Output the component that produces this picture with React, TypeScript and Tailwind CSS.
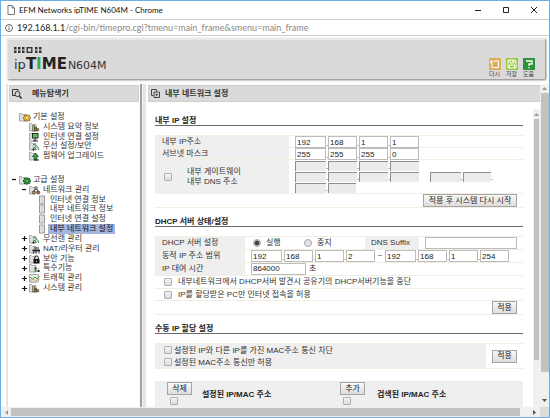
import type { ReactNode } from "react";

const KR = "font-['Liberation_Sans','Noto_Sans_CJK_KR',sans-serif]";
const UI = "font-['Lato','Noto_Sans',sans-serif]";

/* ---------- form controls ---------- */

function Check({ id }: { id: string }) {
  return (
    <input
      id={id}
      type="checkbox"
      className="block size-2 shrink-0 appearance-none rounded-[1px] border border-[#b0b0b0] bg-linear-to-b from-[#f4f4f4] to-[#dcdcdc]"
    />
  );
}

function Radio({ id, checked }: { id: string; checked?: boolean }) {
  return (
    <input
      id={id}
      type="radio"
      name="dhcp"
      defaultChecked={checked}
      className="block size-2 shrink-0 appearance-none rounded-full border border-[#a8a8a8] bg-[#e4e4e4] checked:bg-[radial-gradient(circle,#444_0_2px,#eee_3px)]"
    />
  );
}

function Button({ children }: { children: ReactNode }) {
  return (
    <button className="flex h-[13px] shrink-0 items-center justify-center border border-[#a5a5a5] bg-linear-to-b from-[#f8f8f8] to-[#dddddd] px-1 leading-none whitespace-nowrap text-[#222]">
      {children}
    </button>
  );
}

function Octets({ label, values, disabled, narrow }: { label: string; values: string[]; disabled?: boolean; narrow?: boolean }) {
  return (
    <div className={`flex shrink-0 items-center ${values.length === 2 ? "w-[61px]" : "w-[124px]"} ${narrow ? "h-[11px]" : "h-3"}`}>
      {values.map((v, i) => (
        <div key={i} className="flex h-full flex-1 items-end">
          {i > 0 && <span className="w-[2px] shrink-0 leading-[8px]">.</span>}
          <input
            aria-label={`${label} ${i + 1}`}
            defaultValue={v}
            disabled={disabled}
            className={
              disabled
                ? "h-[10px] w-0 flex-1 border-t border-l border-[#8f8f8f] bg-[#ebebeb] px-px"
                : "h-full w-0 flex-1 border border-[#bcbcbc] bg-white pl-px text-[#222]"
            }
          />
        </div>
      ))}
    </div>
  );
}

function Heading({ children }: { children: ReactNode }) {
  return (
    <h2 className="mt-2 flex h-[11px] items-end border-b border-[#6a6a6a] leading-[9px] font-bold text-[#222]">{children}</h2>
  );
}

/* ---------- icons ---------- */

function PageIcon() {
  return (
    <svg viewBox="0 0 8 10" className="h-[10px] w-2 shrink-0" fill="none" stroke="#777">
      <path d="M1 .5h4l2.5 2.5v6.500H1z" />
      <path d="M5 .5V3h2.500" />
    </svg>
  );
}

function Arrow({ d, color = "#555" }: { d: string; color?: string }) {
  return (
    <svg viewBox="0 0 5 5" className="size-[5px] shrink-0" fill={color}>
      <path d={d} />
    </svg>
  );
}

type Kind = "gold" | "green" | "chart" | "monitor" | "wave" | "upload" | "network" | "router" | "lock" | "grid" | "traffic" | "leaf";

const badge: Record<Kind, ReactNode> = {
  gold: (
    <g>
      <path d="M8 2.500l1.200 1 1.500-.2.100 1.500 1 1.200-1 1.200-.1 1.500-1.500-.2L8 9.500l-1.200-1-1.500.2-.1-1.500-1-1.200 1-1.200.1-1.500 1.500.2z" fill="#f0bd3c" stroke="#6b4e14" strokeWidth=".7" />
      <path d="M8 4.200v3.600M6.200 6h3.600" stroke="#6b4e14" strokeWidth=".5" />
      <circle cx="8" cy="6" r="1" fill="#fff3c0" />
    </g>
  ),
  green: (
    <g>
      <path d="M8 2.500l1.200 1 1.500-.2.100 1.500 1 1.200-1 1.200-.1 1.500-1.500-.2L8 9.500l-1.200-1-1.500.2-.1-1.500-1-1.200 1-1.200.1-1.500 1.500.2z" fill="#2d9a3a" stroke="#103c16" strokeWidth=".8" />
      <path d="M8 4.200v3.600M6.200 6h3.600" stroke="#103c16" strokeWidth=".5" />
      <circle cx="8" cy="6" r=".8" fill="#b8e8b0" />
    </g>
  ),
  chart: (
    <g stroke="#333" strokeWidth=".5">
      <path d="M3.500 3.500h2v5.500h-2z" fill="#e8b020" />
      <path d="M5.500 5h2v4h-2z" fill="#2fa03a" />
      <path d="M7.500 6.500h2.200V9H7.500z" fill="#e0702a" />
    </g>
  ),
  monitor: (
    <g>
      <rect x="3.500" y="1.500" width="5.500" height="4.500" fill="#54c24a" stroke="#222" strokeWidth=".9" />
      <path d="M6 6v2.500M4 9h5" stroke="#222" />
    </g>
  ),
  wave: (
    <g fill="none" stroke="#27923a">
      <path d="M4 3.500a5.500 5.500 0 015.500 5.500M4 6a3 3 0 013 3" />
      <circle cx="4.500" cy="8.500" r=".7" fill="#222" stroke="#222" />
    </g>
  ),
  upload: (
    <g>
      <path d="M6.500 2l3 3.500H8V9H5V5.500H3.500z" fill="#2fa03a" stroke="#222" strokeWidth=".6" />
      <path d="M5 9h5" stroke="#222" />
    </g>
  ),
  network: (
    <g fill="#fff" stroke="#222" strokeWidth=".8">
      <path d="M7 3L4.500 7M7 3l3 4" fill="none" />
      <circle cx="7" cy="3" r="1.300" />
      <circle cx="4.700" cy="7.500" r="1.400" fill="#d8b45a" />
      <circle cx="9.300" cy="7.500" r="1.400" fill="#d66" />
    </g>
  ),
  router: (
    <g>
      <path d="M3.500 5.500h7.500v2H3.500z" fill="#222" />
      <path d="M4.500 7.500v2M7.200 7.500v2M10 7.500v2M5 4h5" stroke="#222" />
    </g>
  ),
  lock: (
    <g>
      <rect x="4.500" y="5" width="6" height="4.500" fill="#111" />
      <path d="M5.700 5V3.700a1.800 1.800 0 013.600 0V5" fill="none" stroke="#111" />
      <path d="M7.500 6.500v1.500" stroke="#fff" strokeWidth=".7" />
    </g>
  ),
  grid: (
    <g>
      <path d="M5.500 4.500h2v2h-2zM8.500 7h2v2h-2z" fill="#222" />
      <path d="M5.500 7h2v2h-2z" fill="#2fa03a" />
      <path d="M8.500 4.500h2v2h-2z" fill="#ccc" />
    </g>
  ),
  traffic: (
    <g fill="none">
      <path d="M1 4l2.500 2L6 4l2 2 2.500-3" stroke="#2fa03a" />
      <path d="M1 7.500l3-1 3 1 3.500-1.500" stroke="#e09040" strokeWidth=".8" />
    </g>
  ),
  leaf: null,
};

function TreeIcon({ kind }: { kind: Kind }) {
  if (kind === "leaf")
    return (
      <svg viewBox="0 0 11 10" className="h-[10px] w-[11px] shrink-0">
        <path d="M.5 1h5v8h-5z" fill="#e2e2e2" stroke="#999" />
        <path d="M2 3h2.500M2 5h2.500M2 7h2.500" stroke="#c4c4c4" strokeWidth=".6" />
      </svg>
    );
  return (
    <svg viewBox="0 0 12 10" className="h-[10px] w-3 shrink-0">
      <path d="M.5 1.500h2l1 1h3.500V9H.5z" fill="#dedede" stroke="#a2a2a2" strokeWidth=".9" />
      {kind === "traffic" && <path d="M.5 1.500h9V9h-9z" fill="#e6eee0" stroke="#999" strokeWidth=".8" />}
      {badge[kind]}
    </svg>
  );
}

/* ---------- menu tree ---------- */

type Node = { level: 0 | 1 | 2; kind: Kind; text: string; sign?: "+" | "-"; active?: boolean };

const basic: Node[] = [
  { level: 0, kind: "gold", text: "기본 설정" },
  { level: 1, kind: "chart", text: "시스템 요약 정보" },
  { level: 1, kind: "monitor", text: "인터넷 연결 설정" },
  { level: 1, kind: "wave", text: "무선 설정/보안" },
  { level: 1, kind: "upload", text: "펌웨어 업그레이드" },
];

const advanced: Node[] = [
  { level: 0, kind: "green", text: "고급 설정", sign: "-" },
  { level: 1, kind: "network", text: "네트워크 관리", sign: "-" },
  { level: 2, kind: "leaf", text: "인터넷 연결 정보" },
  { level: 2, kind: "leaf", text: "내부 네트워크 정보" },
  { level: 2, kind: "leaf", text: "인터넷 연결 설정" },
  { level: 2, kind: "leaf", text: "내부 네트워크 설정", active: true },
  { level: 1, kind: "wave", text: "무선랜 관리", sign: "+" },
  { level: 1, kind: "router", text: "NAT/라우터 관리", sign: "+" },
  { level: 1, kind: "lock", text: "보안 기능", sign: "+" },
  { level: 1, kind: "grid", text: "특수기능", sign: "+" },
  { level: 1, kind: "traffic", text: "트래픽 관리", sign: "+" },
  { level: 1, kind: "chart", text: "시스템 관리", sign: "+" },
];

const indent = ["pl-1", "pl-[14px]", "pl-6"];

function Tree({ nodes, className }: { nodes: Node[]; className: string }) {
  return (
    <ul className={`flex flex-col ${className}`}>
      {nodes.map((n) => (
        <li key={n.text} className={`flex min-h-0 flex-1 items-center ${indent[n.level]}`}>
          <span className="flex w-[7px] shrink-0 items-center">
            {n.sign && (
              <svg viewBox="0 0 5 5" className="size-[5px]" stroke="#111" strokeWidth="1.200">
                <path d={n.sign === "+" ? "M0 2.500h5M2.500 0v5" : "M0 2.500h4"} />
              </svg>
            )}
          </span>
          <TreeIcon kind={n.kind} />
          <a
            href="#"
            className={`flex h-[10px] items-center leading-none whitespace-nowrap ${n.level === 2 ? "-ml-[2px] px-[2px]" : "pl-[2px]"} ${n.active ? "bg-[#a3b5dd] text-[#111]" : "text-[#333]"}`}
          >
            {n.text}
          </a>
        </li>
      ))}
    </ul>
  );
}

/* ---------- header ---------- */

function DotMark() {
  return (
    <svg viewBox="0 0 28 8" className="h-2 w-7" fill="#333">
      {[0, 4, 8, 21, 25].map((x) => (
        <g key={x}>
          <rect x={x} y="1" width="2.500" height="2.500" />
          <rect x={x} y="4.500" width="2.500" height="2.500" />
        </g>
      ))}
      <rect x="13.200" y="1.700" width="4.600" height="4.600" fill="none" stroke="#333" strokeWidth="1.400" />
    </svg>
  );
}

function Tool({ label, color, children }: { label: string; color: string; children: ReactNode }) {
  return (
    <button className="flex w-[17px] flex-col items-center text-[6px] leading-[7px] text-[#444]">
      <svg viewBox="0 0 12 12" className={`mb-px size-3 ${color}`} fill="none" stroke="#fff">
        {children}
      </svg>
      {label}
    </button>
  );
}

function Row({ children, className = "" }: { children: ReactNode; className?: string }) {
  return <div className={`flex border-t border-[#f1eee2] ${className}`}>{children}</div>;
}

export default function App() {
  return (
    <div className={`flex h-screen flex-col overflow-hidden border border-[#6faee3] bg-white text-[8px] text-[#333] ${KR}`}>
      {/* title bar */}
      <div className={`flex h-[19px] shrink-0 items-center border-b border-[#cfcfcf] pr-[11px] pl-[6px] text-[8px] text-[#111] ${UI}`}>
        <PageIcon />
        <span className="ml-1 flex-1 leading-none">EFM Networks ipTIME N604M - Chrome</span>
        <div className="flex gap-[20px]">
          <button aria-label="Minimize"><svg viewBox="0 0 8 8" className="size-2" stroke="#222"><path d="M1 4.500h6" /></svg></button>
          <button aria-label="Maximize"><svg viewBox="0 0 8 8" className="size-2" fill="none" stroke="#222"><path d="M1.500 1.500h5v5h-5z" /></svg></button>
          <button aria-label="Close"><svg viewBox="0 0 8 8" className="size-2" stroke="#222"><path d="M1 1l6 6M7 1L1 7" /></svg></button>
        </div>
      </div>
      {/* address bar */}
      <div className={`flex h-4 shrink-0 items-center border-b border-[#cfcfcf] pl-1 text-[9px] text-[#888] ${UI}`}>
        <svg viewBox="0 0 8 8" className="mr-1 size-2" fill="none" stroke="#555" strokeWidth=".9">
          <circle cx="4" cy="4" r="3.500" />
          <path d="M4 3.500V6M4 1.800v1" />
        </svg>
        <span className="leading-none">
          <span className="text-[#222]">192.168.1.1</span>/cgi-bin/timepro.cgi?tmenu=main_frame&amp;smenu=main_frame
        </span>
      </div>

      {/* banner */}
      <header className="mt-[2px] mr-1 mb-[5px] ml-[6px] flex h-[41px] shrink-0 items-end justify-between border-t-2 border-l border-[#e8e8e8] bg-[#dadada] pr-2 pl-[6px] shadow-[1px_1px_2px_#777]">
        <div className="pb-[3px]">
          <DotMark />
          <h1 className="flex items-baseline font-['DejaVu_Sans',sans-serif] leading-[20px] text-[#333]">
            <span className="text-[13px]">ip</span>
            <span className="text-[15px] font-bold text-[#222]">
              T<span className="text-[#3fa845]">I</span>ME
            </span>
            <span className="pl-px text-[11px]">N604M</span>
          </h1>
        </div>
        <div className="flex pb-px">
          <Tool label="다시" color="bg-[#dfae58]">
            <path d="M5 3h4.500v6.500H3V6M1 4h4M3 2L1.200 4 3 6" />
          </Tool>
          <Tool label="저장" color="bg-[#97c83c]">
            <path d="M2 2h7l1 1v7H2zM4 2v3h4V2M3.500 10V7h5v3M6.500 3v1" />
          </Tool>
          <Tool label="도움" color="bg-[#2f9139]">
            <path d="M3 3h6v3H6v2M6 9v1.200" strokeWidth="1.300" />
          </Tool>
        </div>
      </header>

      {/* frames */}
      <div className="flex min-h-0 flex-1">
        <div className="flex min-w-0 flex-1">
          <nav className="ml-[5px] flex w-[134px] shrink-0 flex-col border-l-2 border-[#e4e4e4]">
            <h2 className="mt-px mr-px ml-px flex h-[17px] shrink-0 items-center border border-[#cdcdcd] bg-[#dadada] pl-[2px] leading-none font-bold text-[#333]">
              <svg viewBox="0 0 10 10" className="mr-[10px] size-[10px]" fill="none" stroke="#333">
                <path d="M3 6.500H.5v-6H6V2" />
                <circle cx="5.500" cy="5" r="2.500" />
                <path d="M7.300 7l2.300 2.500" strokeWidth="1.600" />
              </svg>
              메뉴탐색기
            </h2>
            <Tree nodes={basic} className="mt-[10px] h-[49px] shrink-0" />
            <Tree nodes={advanced} className="mt-[14px] h-[118px] shrink-0" />
          </nav>
          <div className="w-[6px] shrink-0 border-r-[3px] border-l-2 border-r-[#e4e4e4] border-l-[#a0a0a0] bg-[#f4f4f4]" />

          <main className="flex min-w-0 flex-1 flex-col overflow-hidden">
            <h2 className="mt-px ml-[2px] flex h-[17px] shrink-0 items-center border border-r-0 border-[#cdcdcd] bg-[#dadada] pl-[2px] leading-none font-bold text-[#333]">
              <svg viewBox="0 0 9 9" className="mr-[5px] size-[9px]" fill="none" stroke="#444">
                <path d="M2.500 6.500h-2v-6h5v2M3 3h5.500v5.500H3zM4.500 5.700H7M5.700 4.500v2.700" />
              </svg>
              내부 네트워크 설정
            </h2>
            <div className="flex min-h-0 flex-1">
              <div className="min-w-0 flex-1 overflow-hidden pt-[5px] pr-[10px] pl-[9px]">
                <Heading>내부 IP 설정</Heading>
                <div className="mt-[9px]">
                  <Row className="h-3">
                    <div className="flex w-[134px] shrink-0 items-center bg-[#efefef] pl-[7px]">내부 IP주소</div>
                    <div className="pl-[6px]"><Octets label="내부 IP주소" values={["192", "168", "1", "1"]} /></div>
                  </Row>
                  <Row className="h-3">
                    <div className="flex w-[134px] shrink-0 items-center bg-[#efefef] pl-[7px]">서브넷 마스크</div>
                    <div className="pl-[6px]"><Octets label="서브넷 마스크" values={["255", "255", "255", "0"]} /></div>
                  </Row>
                  <Row className="h-[34px]">
                    <div className="flex w-[134px] shrink-0 items-center gap-[15px] bg-[#efefef] pl-[9px]">
                      <Check id="gateway" />
                      <label htmlFor="gateway" className="leading-[10px]">
                        내부 게이트웨이<br />내부 DNS 주소
                      </label>
                    </div>
                    <div className="pl-[6px]">
                      <Octets label="게이트웨이" values={["", "", "", ""]} disabled narrow />
                      <div className="flex items-end gap-[11px]">
                        <Octets label="기본 DNS" values={["", "", "", ""]} disabled narrow />
                        <div className="flex items-end">
                          <Octets label="보조 DNS" values={["", ""]} disabled narrow />
                          <span className="leading-[8px]">.</span>
                        </div>
                      </div>
                      <Octets label="보조 DNS 끝" values={["", ""]} disabled narrow />
                    </div>
                  </Row>
                  <Row className="h-[15px] justify-end border-b pr-[6px]">
                    <div className="w-[94px] *:w-full"><Button>적용 후 시스템 다시 시작</Button></div>
                  </Row>
                </div>

                <Heading>DHCP 서버 상태/설정</Heading>
                <div className="mt-[9px]">
                  <Row className="h-[13px] pr-[6px]">
                    <div className="flex w-[90px] shrink-0 items-center bg-[#efefef] pl-[7px]">DHCP 서버 설정</div>
                    <div className="flex w-[120px] shrink-0 items-center pl-2">
                      <Radio id="on" checked />
                      <label htmlFor="on" className="w-[43px] pl-[5px]">실행</label>
                      <Radio id="off" />
                      <label htmlFor="off" className="pl-[5px]">중지</label>
                    </div>
                    <label htmlFor="suffix" className="flex w-[54px] shrink-0 items-center bg-[#efefef] pl-[6px]">DNS Suffix</label>
                    <input id="suffix" className="ml-[6px] h-3 w-0 flex-1 border border-[#bcbcbc] bg-white px-px" />
                  </Row>
                  <Row className="h-[13px]">
                    <div className="flex w-[90px] shrink-0 items-center bg-[#efefef] pl-[7px]">동적 IP 주소 범위</div>
                    <div className="flex pl-[6px]">
                      <Octets label="시작 주소" values={["192", "168", "1", "2"]} />
                      <span className="w-[10px] text-center leading-[11px]">~</span>
                      <Octets label="끝 주소" values={["192", "168", "1", "254"]} />
                    </div>
                  </Row>
                  <Row className="h-[13px]">
                    <label htmlFor="lease" className="flex w-[90px] shrink-0 items-center bg-[#efefef] pl-[7px]">IP 대여 시간</label>
                    <input id="lease" defaultValue="864000" className="ml-[6px] h-3 w-[55px] border border-[#bcbcbc] bg-white pl-px text-[#222]" />
                    <span className="pl-[3px] leading-3">초</span>
                  </Row>
                  <Row className="h-[13px] items-center gap-[6px] pl-[9px]">
                    <Check id="stop" />
                    <label htmlFor="stop" className="whitespace-nowrap">내부네트워크에서 DHCP서버 발견시 공유기의 DHCP서버기능을 중단</label>
                  </Row>
                  <Row className="h-3 items-center gap-[6px] pl-[9px]">
                    <Check id="allow" />
                    <label htmlFor="allow" className="whitespace-nowrap">IP를 할당받은 PC만 인터넷 접속을 허용</label>
                  </Row>
                  <Row className="h-[15px] justify-end border-b pr-[6px]">
                    <div className="w-[25px] *:w-full"><Button>적용</Button></div>
                  </Row>
                </div>

                <Heading>수동 IP 할당 설정</Heading>
                <div className="mt-[9px] flex h-[26px] items-center border-y border-[#f1eee2] pr-[6px]">
                  <div className="mr-[6px] flex h-full flex-1 flex-col justify-around bg-[#efefef] pl-[9px]">
                    <div className="flex items-center gap-[2px]">
                      <Check id="block" />
                      <label htmlFor="block" className="leading-[11px] whitespace-nowrap">설정된 IP와 다른 IP를 가진 MAC주소 통신 차단</label>
                    </div>
                    <div className="flex items-center gap-[2px]">
                      <Check id="only" />
                      <label htmlFor="only" className="leading-[11px] whitespace-nowrap">설정된 MAC주소 통신만 허용</label>
                    </div>
                  </div>
                  <div className="w-[25px] *:w-full"><Button>적용</Button></div>
                </div>
                <div className="mt-3 flex h-[36px] border-t border-[#f1eee2] bg-[#efefef] pl-3">
                  <div className="flex w-[173px] shrink-0 gap-[10px]">
                    <div className="flex w-[25px] flex-col gap-[2px] *:first:w-full">
                      <Button>삭제</Button>
                      <div className="pl-[3px]"><Check id="assigned" /></div>
                    </div>
                    <label htmlFor="assigned" className="pt-[7px] font-bold text-[#222]">설정된 IP/MAC 주소</label>
                  </div>
                  <div className="flex gap-3">
                    <div className="flex w-[25px] flex-col gap-[2px] *:first:w-full">
                      <Button>추가</Button>
                      <div className="pl-[3px]"><Check id="found" /></div>
                    </div>
                    <label htmlFor="found" className="pt-[7px] font-bold text-[#222]">검색된 IP/MAC 주소</label>
                  </div>
                </div>
              </div>
              {/* inner scrollbar */}
              <div className="mt-[7px] flex w-[7px] shrink-0 flex-col items-center bg-[#f0f0f0]">
                <div className="flex h-[10px] items-center"><Arrow d="M2.500 1L5 4H0z" color="#999" /></div>
                <div className="h-[81%] w-[5px] bg-[#c1c1c1]" />
              </div>
            </div>
          </main>
        </div>
        {/* outer scrollbar */}
        <div className="flex w-[9px] shrink-0 flex-col items-center bg-[#f0f0f0]">
          <div className="flex h-[9px] shrink-0 items-center"><Arrow d="M2.500 1L5 4H0z" color="#999" /></div>
          <div className="w-[8px] flex-1 bg-[#c1c1c1]" />
          <div className="flex h-[35px] shrink-0 items-end pb-1"><Arrow d="M2.500 4L0 1h5z" /></div>
        </div>
      </div>
      <div className="flex h-[10px] shrink-0 items-center bg-[#f0f0f0]">
        <div className="flex w-[10px] justify-center"><Arrow d="M1 2.500L4 0v5z" color="#999" /></div>
        <div className="mr-[12px] h-2 flex-1 bg-[#c1c1c1]" />
        <div className="w-2"><Arrow d="M4 2.500L1 0v5z" /></div>
        <div className="h-full w-[9px] bg-[#dcdcdc]" />
      </div>
    </div>
  );
}
